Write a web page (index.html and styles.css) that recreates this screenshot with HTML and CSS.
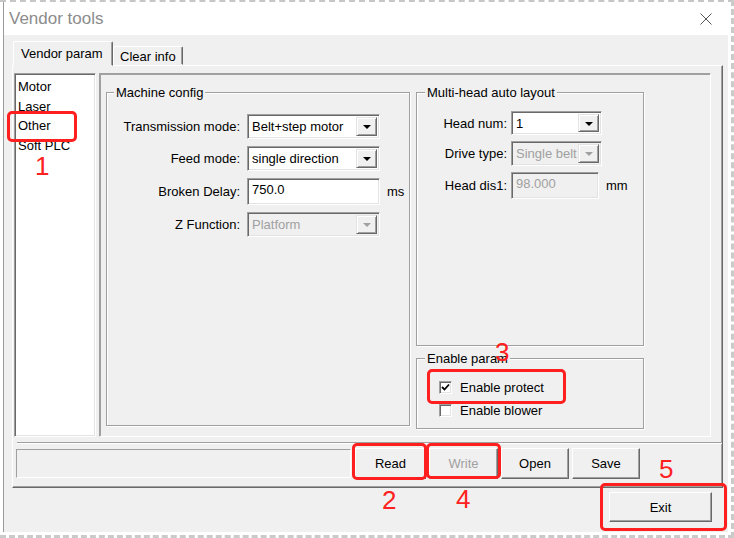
FILE: index.html
```html
<!DOCTYPE html>
<html lang="en">
<head>
    <meta charset="UTF-8">
    <title>Vendor tools</title>
    <link rel="stylesheet" href="styles.css">
</head>
<body>
<div class="screen">
    <div class="window">
        <div class="titlebar">
            <span class="title">Vendor tools</span>
            <svg class="close" width="12" height="12" viewBox="0 0 12 12">
                <path d="M0.5 0.5 L11.5 11.5 M11.5 0.5 L0.5 11.5" stroke="#555" stroke-width="1" fill="none"/>
            </svg>
        </div>

        <div class="client">
            <div class="tabs">
                <div class="tab active">Vendor param</div>
                <div class="tab">Clear info</div>
            </div>

            <div class="tabpanel">
                <div class="panel-main">
                    <ul class="navlist">
                        <li>Motor</li>
                        <li>Laser</li>
                        <li>Other</li>
                        <li>Soft PLC</li>
                    </ul>

                    <div class="frame">
                        <fieldset class="group machine">
                            <legend>Machine config</legend>
                            <div class="form machine-form">
                                <label class="lbl">Transmission mode:</label>
                                <div class="combo">
                                    <span class="combo-text">Belt+step motor</span>
                                    <span class="combo-btn"><span class="tri"></span></span>
                                </div>
                                <span></span>

                                <label class="lbl">Feed mode:</label>
                                <div class="combo">
                                    <span class="combo-text">single direction</span>
                                    <span class="combo-btn"><span class="tri"></span></span>
                                </div>
                                <span></span>

                                <label class="lbl">Broken Delay:</label>
                                <div class="edit tall">750.0</div>
                                <span class="unit">ms</span>

                                <label class="lbl">Z Function:</label>
                                <div class="combo disabled">
                                    <span class="combo-text">Platform</span>
                                    <span class="combo-btn"><span class="tri"></span></span>
                                </div>
                                <span></span>
                            </div>
                        </fieldset>

                        <div class="side">
                            <fieldset class="group multi">
                                <legend>Multi-head auto layout</legend>
                                <div class="form multi-form">
                                    <label class="lbl">Head num:</label>
                                    <div class="combo short">
                                        <span class="combo-text">1</span>
                                        <span class="combo-btn"><span class="tri"></span></span>
                                    </div>
                                    <span></span>

                                    <label class="lbl">Drive type:</label>
                                    <div class="combo disabled">
                                        <span class="combo-text">Single belt</span>
                                        <span class="combo-btn"><span class="tri"></span></span>
                                    </div>
                                    <span></span>

                                    <label class="lbl">Head dis1:</label>
                                    <div class="edit tall disabled narrow">98.000</div>
                                    <span class="unit">mm</span>
                                </div>
                            </fieldset>

                            <fieldset class="group enable">
                                <legend>Enable param</legend>
                                <div class="checks">
                                    <div class="check-row">
                                        <span class="checkbox checked">
                                            <svg width="9" height="9" viewBox="0 0 9 9"><path d="M1 4 L3.5 6.5 L8 1.5" stroke="#000" stroke-width="1.8" fill="none"/></svg>
                                        </span>
                                        <span>Enable protect</span>
                                    </div>
                                    <div class="check-row">
                                        <span class="checkbox"></span>
                                        <span>Enable blower</span>
                                    </div>
                                </div>
                            </fieldset>
                        </div>
                    </div>
                </div>

                <div class="separator"></div>

                <div class="actions">
                    <div class="status"></div>
                    <button class="btn w-read">Read</button>
                    <button class="btn w-write" disabled>Write</button>
                    <button class="btn w-open">Open</button>
                    <button class="btn w-save">Save</button>
                </div>
            </div>

            <div class="footer">
                <button class="btn exit">Exit</button>
            </div>
        </div>
    </div>

    <!-- annotations -->
    <div class="mark mark-other"></div>
    <div class="mark mark-protect"></div>
    <div class="mark mark-read"></div>
    <div class="mark mark-write"></div>
    <div class="mark mark-exit"></div>
    <span class="num num-1">1</span>
    <span class="num num-2">2</span>
    <span class="num num-3">3</span>
    <span class="num num-4">4</span>
    <span class="num num-5">5</span>
</div>
</body>
</html>
```

FILE: styles.css
```css
* {
    box-sizing: border-box;
}
body {
    margin: 0;
    background: #fff;
    font-family: "Liberation Sans", Arial, sans-serif;
    font-size: 13px;
    color: #000;
}
.screen {
    position: relative;
    width: 734px;
    height: 538px;
    padding-left: 3px;
    background: #fff;
    border-top: 2px dashed #c6c6c6;
    border-right: 3px dashed #cacaca;
    border-bottom: 3px dashed #cacaca;
}
.window {
    width: 725px;
    height: 530px;
    border-left: 1px solid #9a9a9a;
    display: flex;
    flex-direction: column;
}
.titlebar {
    height: 33px;
    flex: none;
    background: #fff;
    display: flex;
    align-items: center;
    justify-content: space-between;
    padding: 0 16px 0 5px;
}
.title {
    font-size: 17px;
    color: #8c8c8c;
}
.client {
    flex: 1;
    background: #f0f0f0;
    padding: 7px 0 0 8px;
}

/* tabs */
.tabs {
    display: flex;
    align-items: flex-end;
    height: 23px;
    padding-left: 1px;
}
.tab {
    height: 19px;
    line-height: 19px;
    padding: 0 6px;
    border: 1px solid;
    border-color: #fff #696969 transparent #fff;
    box-shadow: inset -1px 0 #a0a0a0;
    border-radius: 2px 2px 0 0;
    background: #f0f0f0;
}
.tab.active {
    height: 25px;
    line-height: 24px;
    padding: 0 7px;
    margin-bottom: -1px;
    position: relative;
    z-index: 1;
    width: 100px;
}
.tabpanel {
    width: 711px;
    height: 423px;
    border: 1px solid;
    border-color: #fff #696969 #696969 #fff;
    box-shadow: inset -1px -1px #a0a0a0;
    padding: 7px 0 0 1px;
}
.panel-main {
    display: flex;
    gap: 3px;
    height: 364px;
}
.navlist {
    list-style: none;
    margin: 0;
    width: 82px;
    padding: 3px 2px;
    background: #fff;
    border: 1px solid;
    border-color: #a0a0a0 #fff #fff #a0a0a0;
    box-shadow: inset 1px 1px #696969, inset -1px -1px #e3e3e3;
}
.navlist li {
    line-height: 19.7px;
    padding-left: 1px;
}
.frame {
    width: 612px;
    display: flex;
    gap: 6px;
    padding: 11px 0 0 6px;
    border: 1px solid;
    border-color: #a0a0a0 #fff #fff #a0a0a0;
    box-shadow: inset 1px 1px #a0a0a0;
}

/* group boxes */
.group {
    margin: 0;
    padding: 0;
    min-width: 0;
    border: 1px solid #a0a0a0;
    box-shadow: inset 1px 1px #fff, 1px 1px #fff;
}
.group legend {
    margin-left: 7px;
    padding: 0 2px;
    line-height: 15px;
    background: #f0f0f0;
}
.machine {
    width: 304px;
    height: 341px;
}
.side {
    display: flex;
    flex-direction: column;
    gap: 5px;
}
.multi {
    width: 228px;
    height: 261px;
}
.multi legend {
    margin-left: 8px;
}
.enable {
    width: 228px;
    height: 78px;
}
.enable legend {
    margin-left: 8px;
}
.checks {
    padding: 10px 0 0 22px;
}
.form {
    display: grid;
    align-items: center;
}
.machine-form {
    grid-template-columns: 133px 133px auto;
    column-gap: 7px;
    row-gap: 7px;
    padding-top: 14px;
}
.multi-form {
    grid-template-columns: 90px 91px auto;
    column-gap: 4px;
    row-gap: 6px;
    padding-top: 11px;
}
.lbl {
    text-align: right;
}

/* inputs */
.combo {
    height: 25px;
    display: flex;
    align-items: stretch;
    background: #fff;
    border: 1px solid;
    border-color: #a0a0a0 #fff #fff #a0a0a0;
    box-shadow: inset 1px 1px #696969, inset -1px -1px #e3e3e3;
    padding: 2px;
}
.combo.short {
    height: 24px;
}
.combo-text {
    flex: 1;
    line-height: 19px;
    padding-left: 2px;
    white-space: nowrap;
    overflow: hidden;
}
.combo-btn {
    width: 21px;
    background: #f0f0f0;
    border: 1px solid;
    border-color: #e3e3e3 #696969 #696969 #e3e3e3;
    box-shadow: inset 1px 1px #fff, inset -1px -1px #a0a0a0;
    display: flex;
    align-items: center;
    justify-content: center;
}
.tri {
    width: 0;
    height: 0;
    border-left: 4px solid transparent;
    border-right: 4px solid transparent;
    border-top: 4px solid #000;
    margin-top: 1px;
}
.combo.disabled {
    background: #f0f0f0;
    color: #a0a0a0;
}
.combo.disabled .tri {
    border-top-color: #a0a0a0;
}
.edit {
    height: 25px;
    background: #fff;
    border: 1px solid;
    border-color: #a0a0a0 #fff #fff #a0a0a0;
    box-shadow: inset 1px 1px #696969, inset -1px -1px #e3e3e3;
    padding: 0 4px;
    line-height: 21px;
}
.edit.tall {
    height: 27px;
    line-height: 22px;
}
.edit.disabled {
    background: #f0f0f0;
    color: #a0a0a0;
}
.edit.narrow {
    width: 88px;
}

/* checkboxes */
.check-row {
    display: flex;
    align-items: center;
    gap: 8px;
    height: 23px;
}
.checkbox {
    width: 13px;
    height: 13px;
    background: #fff;
    border: 1px solid;
    border-color: #a0a0a0 #fff #fff #a0a0a0;
    box-shadow: inset 1px 1px #696969, inset -1px -1px #e3e3e3;
    display: flex;
    align-items: center;
    justify-content: center;
}

/* bottom */
.separator {
    height: 2px;
    margin: 5px 0 0 3px;
    border-top: 1px solid #a0a0a0;
    border-bottom: 1px solid #fff;
}
.actions {
    display: flex;
    align-items: center;
    gap: 3px;
    height: 31px;
    margin-top: 4px;
    padding-left: 2px;
}
.status {
    width: 335px;
    height: 29px;
    margin-right: 1px;
    border: 1px solid;
    border-color: #a0a0a0 #fff #fff #a0a0a0;
}
.btn {
    height: 31px;
    font-family: "Liberation Sans", Arial, sans-serif;
    font-size: 13px;
    color: #000;
    background: #f0f0f0;
    border: 1px solid;
    border-color: #fff #696969 #696969 #fff;
    box-shadow: inset -1px -1px #a0a0a0;
    padding: 0;
}
.btn:disabled {
    color: #a0a0a0;
}
.w-read { width: 71px; }
.w-write { width: 69px; }
.w-open { width: 68px; }
.w-save { width: 68px; }
.footer {
    display: flex;
    justify-content: flex-end;
    padding: 4px 16px 0 0;
}
.btn.exit {
    width: 103px;
    height: 30px;
}

/* red annotations */
.mark {
    position: absolute;
    border: 3px solid #ff1f1f;
    border-radius: 5px;
}
.mark-other { left: 7px; top: 109px; width: 70px; height: 31px; }
.mark-protect { left: 427px; top: 367px; width: 139px; height: 35px; }
.mark-read { left: 352px; top: 441px; width: 75px; height: 37px; }
.mark-write { left: 426px; top: 441px; width: 75px; height: 36px; }
.mark-exit { left: 600px; top: 481px; width: 127px; height: 48px; }
.num {
    position: absolute;
    font-size: 26px;
    line-height: 26px;
    color: #ff2020;
}
.num-1 { left: 35px; top: 151px; }
.num-2 { left: 382px; top: 485px; }
.num-3 { left: 495px; top: 337px; }
.num-4 { left: 456px; top: 484px; }
.num-5 { left: 659px; top: 454px; }
```
